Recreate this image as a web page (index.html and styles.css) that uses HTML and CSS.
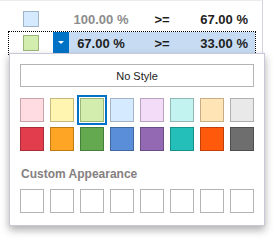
FILE: index.html
```html
<!DOCTYPE html>
<html lang="en">
<head>
  <meta charset="UTF-8">
  <title>Format Rule - Color Picker</title>
  <link rel="stylesheet" href="styles.css">
</head>
<body>

  <!-- Range grid -->
  <div class="grid">
    <div class="row">
      <div class="cell-swatch"><span class="swatch swatch-blue"></span></div>
      <div class="cell-btn"></div>
      <div class="cell-value muted">100.00 %</div>
      <div class="cell-op">&gt;=</div>
      <div class="cell-limit">67.00 %</div>
    </div>
    <div class="row focused">
      <div class="cell-swatch"><span class="swatch swatch-green"></span></div>
      <div class="cell-btn">
        <svg width="16" height="22" viewBox="0 0 16 22"><path d="M5 9h6l-3 3z" fill="#fff"/></svg>
      </div>
      <div class="cell-value">67.00 %</div>
      <div class="cell-op">&gt;=</div>
      <div class="cell-limit">33.00 %</div>
    </div>
  </div>

  <!-- Style popup -->
  <div class="popup">
    <button class="no-style">No Style</button>

    <div class="palette">
      <span class="color c-pink"></span>
      <span class="color c-yellow"></span>
      <span class="color c-green selected"></span>
      <span class="color c-blue"></span>
      <span class="color c-lilac"></span>
      <span class="color c-aqua"></span>
      <span class="color c-peach"></span>
      <span class="color c-silver"></span>

      <span class="color c-red"></span>
      <span class="color c-orange"></span>
      <span class="color c-grass"></span>
      <span class="color c-navy"></span>
      <span class="color c-purple"></span>
      <span class="color c-teal"></span>
      <span class="color c-fire"></span>
      <span class="color c-gray"></span>
    </div>

    <div class="section-title">Custom Appearance</div>

    <div class="palette custom">
      <span class="color"></span>
      <span class="color"></span>
      <span class="color"></span>
      <span class="color"></span>
      <span class="color"></span>
      <span class="color"></span>
      <span class="color"></span>
      <span class="color"></span>
    </div>
  </div>

</body>
</html>
```

FILE: styles.css
```css
* {
  box-sizing: border-box;
}

body {
  margin: 0;
  background: #fff;
  font-family: 'Liberation Sans', Arial, sans-serif;
  color: #1e1e1e;
}

/* grid */

.grid {
  width: 263px;
  height: 120px;
  padding-top: 6px;
  border-top: 1px solid #ececec;
  border-right: 1px solid #d4d4e0;
}

.row {
  display: grid;
  grid-template-columns: 44px 16px 64px 60px 62px;
  width: 248px;
  height: 24px;
  margin-left: 8px;
  border: 1px solid transparent;
  font-size: 13px;
  font-weight: bold;
}

.row > div {
  display: flex;
  align-items: center;
}

.row.focused {
  border: 1px dotted #000;
}

.row.focused .cell-value,
.row.focused .cell-op,
.row.focused .cell-limit {
  background: #c7dcf3;
}

.row.focused .cell-btn {
  background: #0072c6;
}

.cell-swatch {
  padding-left: 14px;
}

.swatch {
  width: 16px;
  height: 16px;
  border: 1px solid #9fb4c8;
}

.swatch-blue {
  background: #d6eaff;
}

.swatch-green {
  background: #d3edae;
  border-color: #9bb57a;
}

.cell-value {
  justify-content: center;
}

.cell-op {
  justify-content: center;
  padding-right: 2px;
}

.cell-limit {
  justify-content: flex-end;
  padding-right: 7px;
}

.muted {
  color: #8c8c8c;
}

/* popup */

.popup {
  position: absolute;
  left: 9px;
  top: 53px;
  width: 256px;
  height: 173px;
  padding: 10px;
  background: #fff;
  border: 1px solid #c8c8d8;
  box-shadow: 0 4px 8px rgba(0, 0, 0, 0.32);
}

.no-style {
  display: block;
  width: 234px;
  height: 23px;
  margin: 0 0 11px;
  padding: 0;
  background: #fff;
  border: 1px solid #b4b4b4;
  font-family: 'Liberation Sans', Arial, sans-serif;
  font-size: 11px;
  color: #222;
}

.palette {
  display: grid;
  grid-template-columns: repeat(8, 24px);
  column-gap: 6px;
  row-gap: 5px;
}

.color {
  width: 24px;
  height: 24px;
  border: 1px solid #b4b4b4;
  background: #fff;
}

.color.selected {
  outline: 2px solid #0072c6;
  outline-offset: 1px;
}

.c-pink { background: #ffdce1; border-color: #c8a4aa; }
.c-yellow { background: #fff5b1; border-color: #c6b87c; }
.c-green { background: #d3edae; border-color: #9bb57a; }
.c-blue { background: #d6eaff; border-color: #a2b4c6; }
.c-lilac { background: #f3dcf8; border-color: #b8a2be; }
.c-aqua { background: #c3f3f0; border-color: #92b8b6; }
.c-peach { background: #ffe4b5; border-color: #c8ae86; }
.c-silver { background: #e9e9e9; border-color: #b0b0b0; }

.c-red { background: #e23d4d; border-color: #a82c38; }
.c-orange { background: #ffa526; border-color: #c07a12; }
.c-grass { background: #64a84f; border-color: #45803a; }
.c-navy { background: #5a8ed8; border-color: #3f689e; }
.c-purple { background: #9469b4; border-color: #6b4c86; }
.c-teal { background: #25bfb9; border-color: #18918c; }
.c-fire { background: #ff5a0b; border-color: #c04008; }
.c-gray { background: #6e6e6e; border-color: #4e4e4e; }

.section-title {
  margin: 16px 0 8px 1px;
  font-size: 12px;
  font-weight: bold;
  color: #858080;
}
```
